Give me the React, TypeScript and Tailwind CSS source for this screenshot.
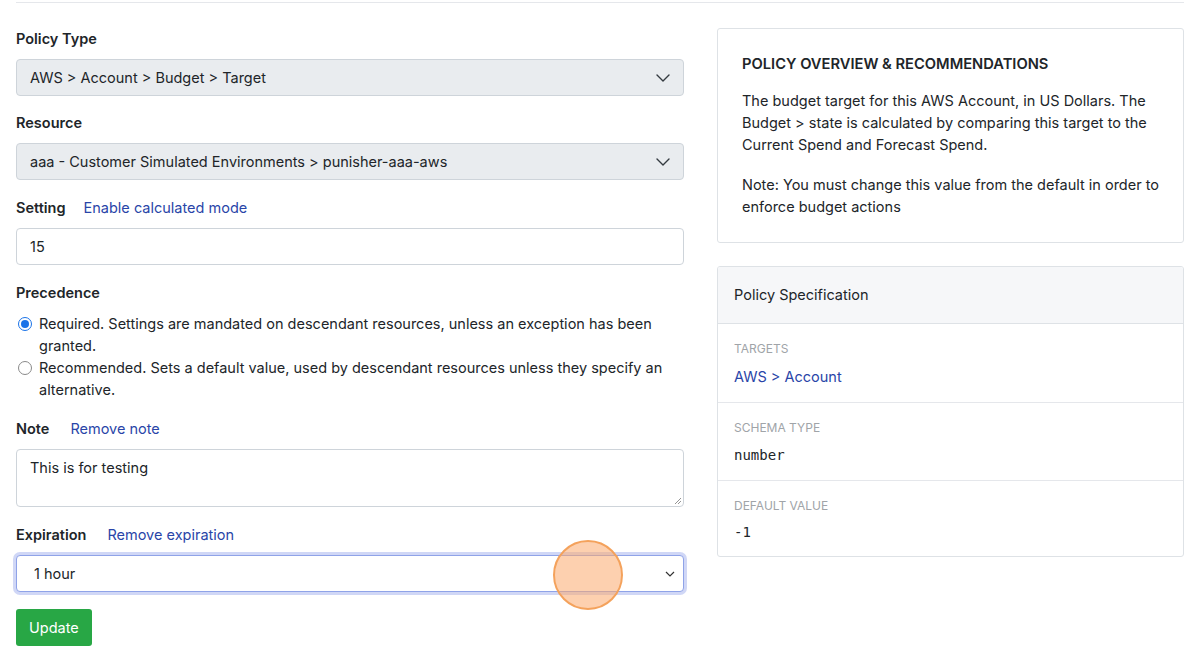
import React from "react";

const Chevron = ({ className = "" }: { className?: string }) => (
  <svg className={className} width="14" height="8" viewBox="0 0 14 8" fill="none">
    <path d="M1 1l6 6 6-6" stroke="#343a40" strokeWidth="1.4" strokeLinecap="round" strokeLinejoin="round" />
  </svg>
);

export default function App() {
  return (
    <div className="w-[1200px] h-[670px] overflow-hidden bg-white text-[#212529] font-['Inter',sans-serif] text-[14.5px]">
      <div className="mx-4 border-t border-[#e5e7eb] mt-[2px]" />
      <div className="flex px-4 gap-[33px] pt-[25px]">
        {/* Left form */}
        <div className="w-[668px] flex flex-col">
          <div className="font-semibold leading-[22px]">Policy Type</div>
          <div className="mt-[9px] h-[37px] bg-[#e9ecef] border border-[#ced4da] rounded-[4px] flex items-center justify-between pl-[13px] pr-[13px]">
            <span>AWS &gt; Account &gt; Budget &gt; Target</span>
            <Chevron />
          </div>
          <div className="font-semibold leading-[22px] mt-[16px]">Resource</div>
          <div className="mt-[9px] h-[37px] bg-[#e9ecef] border border-[#ced4da] rounded-[4px] flex items-center justify-between pl-[13px] pr-[13px]">
            <span>aaa - Customer Simulated Environments &gt; punisher-aaa-aws</span>
            <Chevron />
          </div>
          <div className="flex items-center gap-[18px] leading-[22px] mt-[17px]">
            <span className="font-semibold">Setting</span>
            <span className="text-[#2945a8]">Enable calculated mode</span>
          </div>
          <div className="mt-[9px] h-[37px] bg-white border border-[#ced4da] rounded-[4px] flex items-center pl-[13px]">
            <span>15</span>
          </div>
          <div className="font-semibold leading-[22px] mt-[17px]">Precedence</div>
          <div className="mt-[9px] flex flex-col gap-0 leading-[22px]">
            <div className="flex items-start gap-[7px] pl-[2px]">
              <span className="mt-[4px] w-[14px] h-[14px] rounded-full border border-[#1a73e8] bg-white flex items-center justify-center shrink-0">
                <span className="w-[8px] h-[8px] rounded-full bg-[#1a73e8]" />
              </span>
              <span>Required. Settings are mandated on descendant resources, unless an exception has been granted.</span>
            </div>
            <div className="flex items-start gap-[7px] pl-[2px]">
              <span className="mt-[4px] w-[14px] h-[14px] rounded-full border border-[#8a8a8a] bg-white shrink-0" />
              <span>Recommended. Sets a default value, used by descendant resources unless they specify an alternative.</span>
            </div>
          </div>
          <div className="flex items-center gap-[21px] leading-[22px] mt-[17px]">
            <span className="font-semibold">Note</span>
            <span className="text-[#2945a8]">Remove note</span>
          </div>
          <div className="relative mt-[9px] h-[58px] bg-white border border-[#ced4da] rounded-[4px] pl-[13px] pt-[7px]">
            <span>This is for testing</span>
            <svg className="absolute right-[1px] bottom-[1px]" width="8" height="8" viewBox="0 0 8 8">
              <path d="M7 1L1 7M7 4L4 7" stroke="#888" strokeWidth="0.9" />
            </svg>
          </div>
          <div className="flex items-center gap-[21px] leading-[22px] mt-[17px]">
            <span className="font-semibold">Expiration</span>
            <span className="text-[#2945a8]">Remove expiration</span>
          </div>
          <div className="relative mt-[9px] h-[37px] bg-white border border-[#8fa3e8] rounded-[4px] shadow-[0_0_0_3px_rgba(120,140,230,0.35)] flex items-center justify-between pl-[17px] pr-[8px]">
            <span>1 hour</span>
            <svg width="10" height="6" viewBox="0 0 10 6" fill="none">
              <path d="M1 1l4 4 4-4" stroke="#333" strokeWidth="1.2" />
            </svg>
            <span className="absolute left-[536px] top-[-16px] w-[70px] h-[70px] rounded-full bg-[rgba(252,170,110,0.55)] border-[2px] border-[#f4a25c]" />
          </div>
          <div className="mt-[17px]">
            <button className="h-[37px] px-[13px] bg-[#28a745] text-white rounded-[3px] leading-[22px]">Update</button>
          </div>
        </div>

        {/* Right column */}
        <div className="w-[467px] flex flex-col gap-[23px]">
          <div className="border border-[#dee2e6] rounded-[3px] pl-[24px] pr-[18px] pt-[25px] pb-[24px]">
            <div className="font-semibold text-[14.7px] leading-[20px] uppercase">Policy Overview &amp; Recommendations</div>
            <p className="mt-[16px] leading-[22px]">
              The budget target for this AWS Account, in US Dollars. The Budget &gt; state is calculated by comparing this target to the Current Spend and Forecast Spend.
            </p>
            <p className="mt-[18px] leading-[22px]">
              Note: You must change this value from the default in order to enforce budget actions
            </p>
          </div>
          <div className="border border-[#dee2e6] rounded-[3px] overflow-hidden">
            <div className="bg-[#f6f7f9] h-[57px] border-b border-[#dee2e6] flex items-center px-4">
              Policy Specification
            </div>
            <div className="px-4 pt-[17px] pb-[14px] border-b border-[#e5e7eb]">
              <div className="text-[12px] text-[#a0a4a8] uppercase leading-[16px]">Targets</div>
              <div className="text-[#2945a8] mt-[9px] leading-[22px]">AWS &gt; Account</div>
            </div>
            <div className="px-4 pt-[17px] pb-[14px] border-b border-[#e5e7eb]">
              <div className="text-[12px] text-[#a0a4a8] uppercase leading-[16px]">Schema Type</div>
              <div className="mt-[8px] leading-[22px] font-['DejaVu_Sans_Mono',monospace] text-[14px]">number</div>
            </div>
            <div className="px-4 pt-[17px] pb-[13px]">
              <div className="text-[12px] text-[#a0a4a8] uppercase leading-[16px]">Default Value</div>
              <div className="mt-[7px] leading-[22px] font-['DejaVu_Sans_Mono',monospace] text-[14px]">-1</div>
            </div>
          </div>
        </div>
      </div>
    </div>
  );
}
